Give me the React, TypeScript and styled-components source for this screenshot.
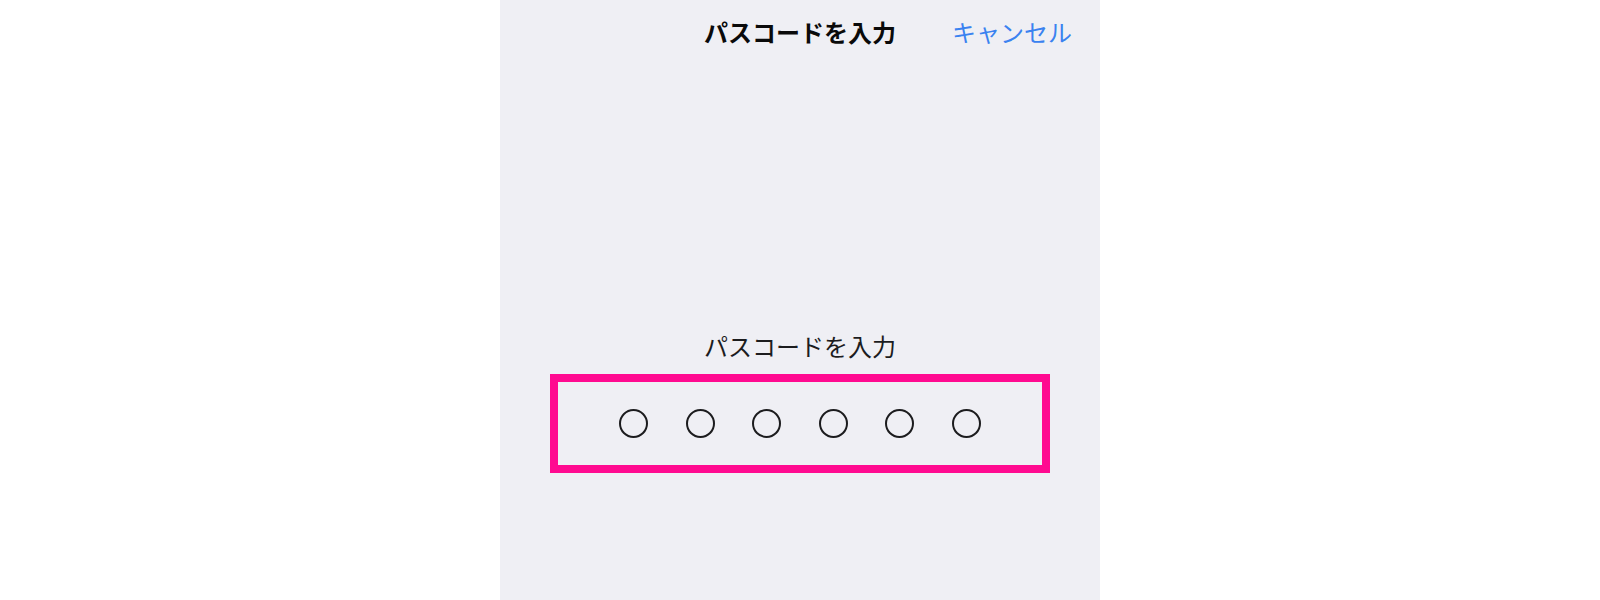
import styled, {createGlobalStyle} from "styled-components";

const GlobalStyle = createGlobalStyle`
    html, body {
        margin: 0;
        padding: 0;
        background: #ffffff;
    }

    body {
        font-family: "Noto Sans CJK JP", "Noto Sans", sans-serif;
    }
`

const PASSCODE_LENGTH = 6;

export default function App() {
    return (
        <>
            <GlobalStyle/>
            <Page>
                <Sheet>
                    <NavBar>
                        <span/>
                        <Title>パスコードを入力</Title>
                        <CancelButton type="button">キャンセル</CancelButton>
                    </NavBar>
                    <Body>
                        <Prompt>パスコードを入力</Prompt>
                        <Highlight>
                            <Dots>
                                {Array.from({length: PASSCODE_LENGTH}).map((_, i) => (
                                    <Dot key={i}/>
                                ))}
                            </Dots>
                        </Highlight>
                    </Body>
                </Sheet>
            </Page>
        </>
    );
}

const Page = styled.div`
    display: flex;
    justify-content: center;
    width: 100%;
    min-height: 600px;
`

const Sheet = styled.div`
    width: 600px;
    min-height: 600px;
    background-color: #efeff4;
    display: flex;
    flex-direction: column;
`

const NavBar = styled.div`
    display: grid;
    grid-template-columns: 1fr auto 1fr;
    align-items: center;
    height: 64px;
    padding: 0 28px;
`

const Title = styled.h1`
    margin: 0;
    font-size: 24px;
    font-weight: 700;
    line-height: 28px;
    color: #0a0a0a;
`

const CancelButton = styled.button`
    justify-self: end;
    border: none;
    background: none;
    padding: 0;
    font-family: inherit;
    font-size: 24px;
    font-weight: 400;
    line-height: 28px;
    color: #3a82f0;
    cursor: pointer;
`

const Body = styled.div`
    display: flex;
    flex-direction: column;
    align-items: center;
    padding-top: 268px;
    gap: 14px;
`

const Prompt = styled.div`
    font-size: 24px;
    line-height: 28px;
    color: #1c1c1e;
`

const Highlight = styled.div`
    box-sizing: border-box;
    width: 500px;
    height: 99px;
    border: 8px solid #ff0a90;
    display: flex;
    align-items: center;
    justify-content: center;
`

const Dots = styled.div`
    display: flex;
    gap: 37.5px;
`

const Dot = styled.span`
    box-sizing: border-box;
    width: 29px;
    height: 29px;
    border-radius: 50%;
    border: 2px solid #1c1c1e;
`
